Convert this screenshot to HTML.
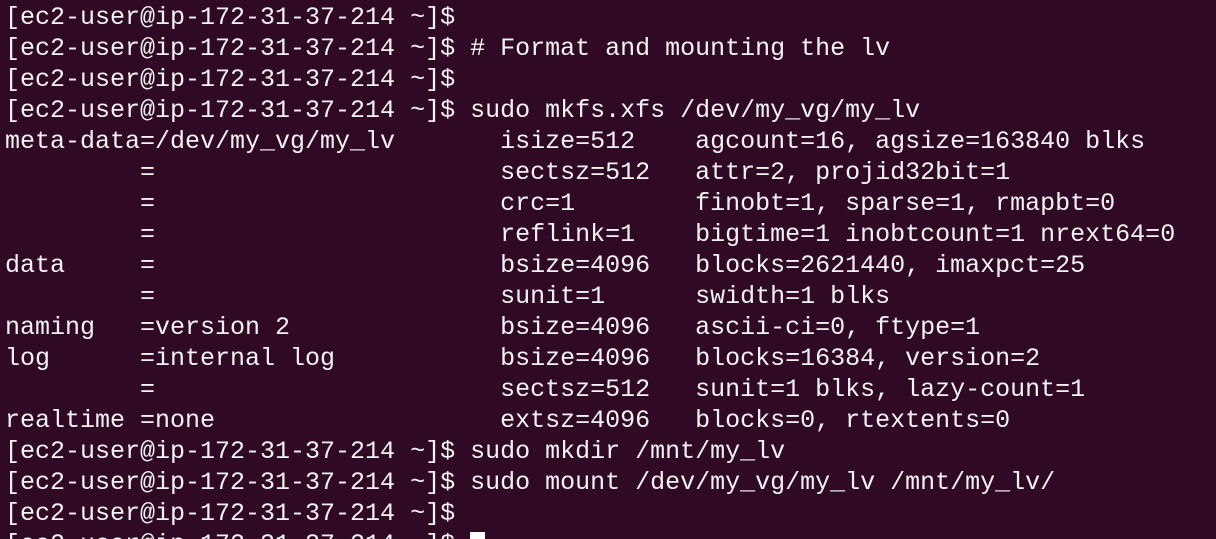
<!DOCTYPE html>
<html><head><meta charset="utf-8"><style>
html,body{margin:0;padding:0;background:#300a24;width:1216px;height:539px;overflow:hidden}
pre{margin:0;padding:2px 0 0 5px;font-family:"Liberation Mono",monospace;font-size:25px;letter-spacing:0;line-height:31px;color:#f2f2f2}
.c{display:inline-block;width:15px;height:25px;background:#fff;vertical-align:-6px}
</style></head><body><pre>[ec2-user@ip-172-31-37-214 ~]$
[ec2-user@ip-172-31-37-214 ~]$ # Format and mounting the lv
[ec2-user@ip-172-31-37-214 ~]$
[ec2-user@ip-172-31-37-214 ~]$ sudo mkfs.xfs /dev/my_vg/my_lv
meta-data=/dev/my_vg/my_lv       isize=512    agcount=16, agsize=163840 blks
         =                       sectsz=512   attr=2, projid32bit=1
         =                       crc=1        finobt=1, sparse=1, rmapbt=0
         =                       reflink=1    bigtime=1 inobtcount=1 nrext64=0
data     =                       bsize=4096   blocks=2621440, imaxpct=25
         =                       sunit=1      swidth=1 blks
naming   =version 2              bsize=4096   ascii-ci=0, ftype=1
log      =internal log           bsize=4096   blocks=16384, version=2
         =                       sectsz=512   sunit=1 blks, lazy-count=1
realtime =none                   extsz=4096   blocks=0, rtextents=0
[ec2-user@ip-172-31-37-214 ~]$ sudo mkdir /mnt/my_lv
[ec2-user@ip-172-31-37-214 ~]$ sudo mount /dev/my_vg/my_lv /mnt/my_lv/
[ec2-user@ip-172-31-37-214 ~]$
[ec2-user@ip-172-31-37-214 ~]$ <span class="c"></span></pre></body></html>
